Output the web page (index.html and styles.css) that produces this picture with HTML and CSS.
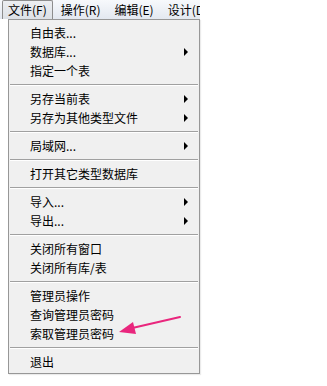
FILE: index.html
```html
<!doctype html>
<html>
<head>
<meta charset="utf-8">
<title>文件菜单</title>
<link rel="stylesheet" href="styles.css">
</head>
<body>
<div id="screen">
    <div class="menubar">
        <span class="bar_item active">文件(F)</span>
        <span class="bar_item">操作(R)</span>
        <span class="bar_item">编辑(E)</span>
        <span class="bar_item">设计(D)</span>
    </div>

    <div class="dropdown">
        <div class="item">自由表...</div>
        <div class="item sub">数据库...</div>
        <div class="item">指定一个表</div>
        <div class="sep"></div>
        <div class="item sub">另存当前表</div>
        <div class="item sub">另存为其他类型文件</div>
        <div class="sep"></div>
        <div class="item sub">局域网...</div>
        <div class="sep"></div>
        <div class="item">打开其它类型数据库</div>
        <div class="sep"></div>
        <div class="item sub">导入...</div>
        <div class="item sub">导出...</div>
        <div class="sep"></div>
        <div class="item">关闭所有窗口</div>
        <div class="item">关闭所有库/表</div>
        <div class="sep"></div>
        <div class="item">管理员操作</div>
        <div class="item">查询管理员密码</div>
        <div class="item">索取管理员密码</div>
        <div class="sep"></div>
        <div class="item">退出</div>
    </div>

    <!-- 标注箭头 -->
    <svg class="mark" width="327" height="386" viewBox="0 0 327 386">
        <line x1="180" y1="317" x2="128" y2="329" stroke="#e9267d" stroke-width="2" stroke-linecap="round"/>
        <polygon points="119,332 133,322 136,334" fill="#e9267d"/>
    </svg>
</div>
</body>
</html>
```

FILE: styles.css
```css
body,div,span{margin:0; padding:0;}
body{
	background:#fff;
	font-family:"Noto Sans CJK SC", sans-serif;
	font-size:12px;
	color:#000;
}
#screen{
	position:relative;
	width:327px;
	height:386px;
	overflow:hidden;
}

/* 顶部菜单栏，截图里只截到 200px 宽 */
.menubar{
	display:flex;
	width:198px;
	height:19px;
	padding-left:2px;
	overflow:hidden;
	white-space:nowrap;
	background:linear-gradient(#f7f9fc, #e3e8f0);
}
.bar_item{
	flex:none;
	padding:0 5px;
	margin-right:2px;
	line-height:18px;
	border:1px solid transparent;
	border-bottom:none;
}
.bar_item.active{
	border-color:#8d8d8d;
	border-radius:2px 2px 0 0;
	background:linear-gradient(#eceef1, #dde1e6);
}

/* 下拉菜单 */
.dropdown{
	width:186px;
	margin-left:8px;
	padding:3px 2px 2px;
	border:1px solid #979797;
	background:#f0f0f0;
	box-shadow:1px 1px 1px rgba(0,0,0,0.08);
}
.item{
	display:flex;
	align-items:center;
	justify-content:space-between;
	height:19px;
	line-height:19px;
	padding:0 9px 0 19px;
}
.item.sub::after{
	content:"";
	width:0;
	height:0;
	border-left:4px solid #000;
	border-top:4px solid transparent;
	border-bottom:4px solid transparent;
}
.sep{
	height:1px;
	margin:4px -1px 3px;
	background:#a0a0a0;
	border-bottom:1px solid #fff;
}

.mark{
	position:absolute;
	left:0;
	top:0;
	pointer-events:none;
}
```
